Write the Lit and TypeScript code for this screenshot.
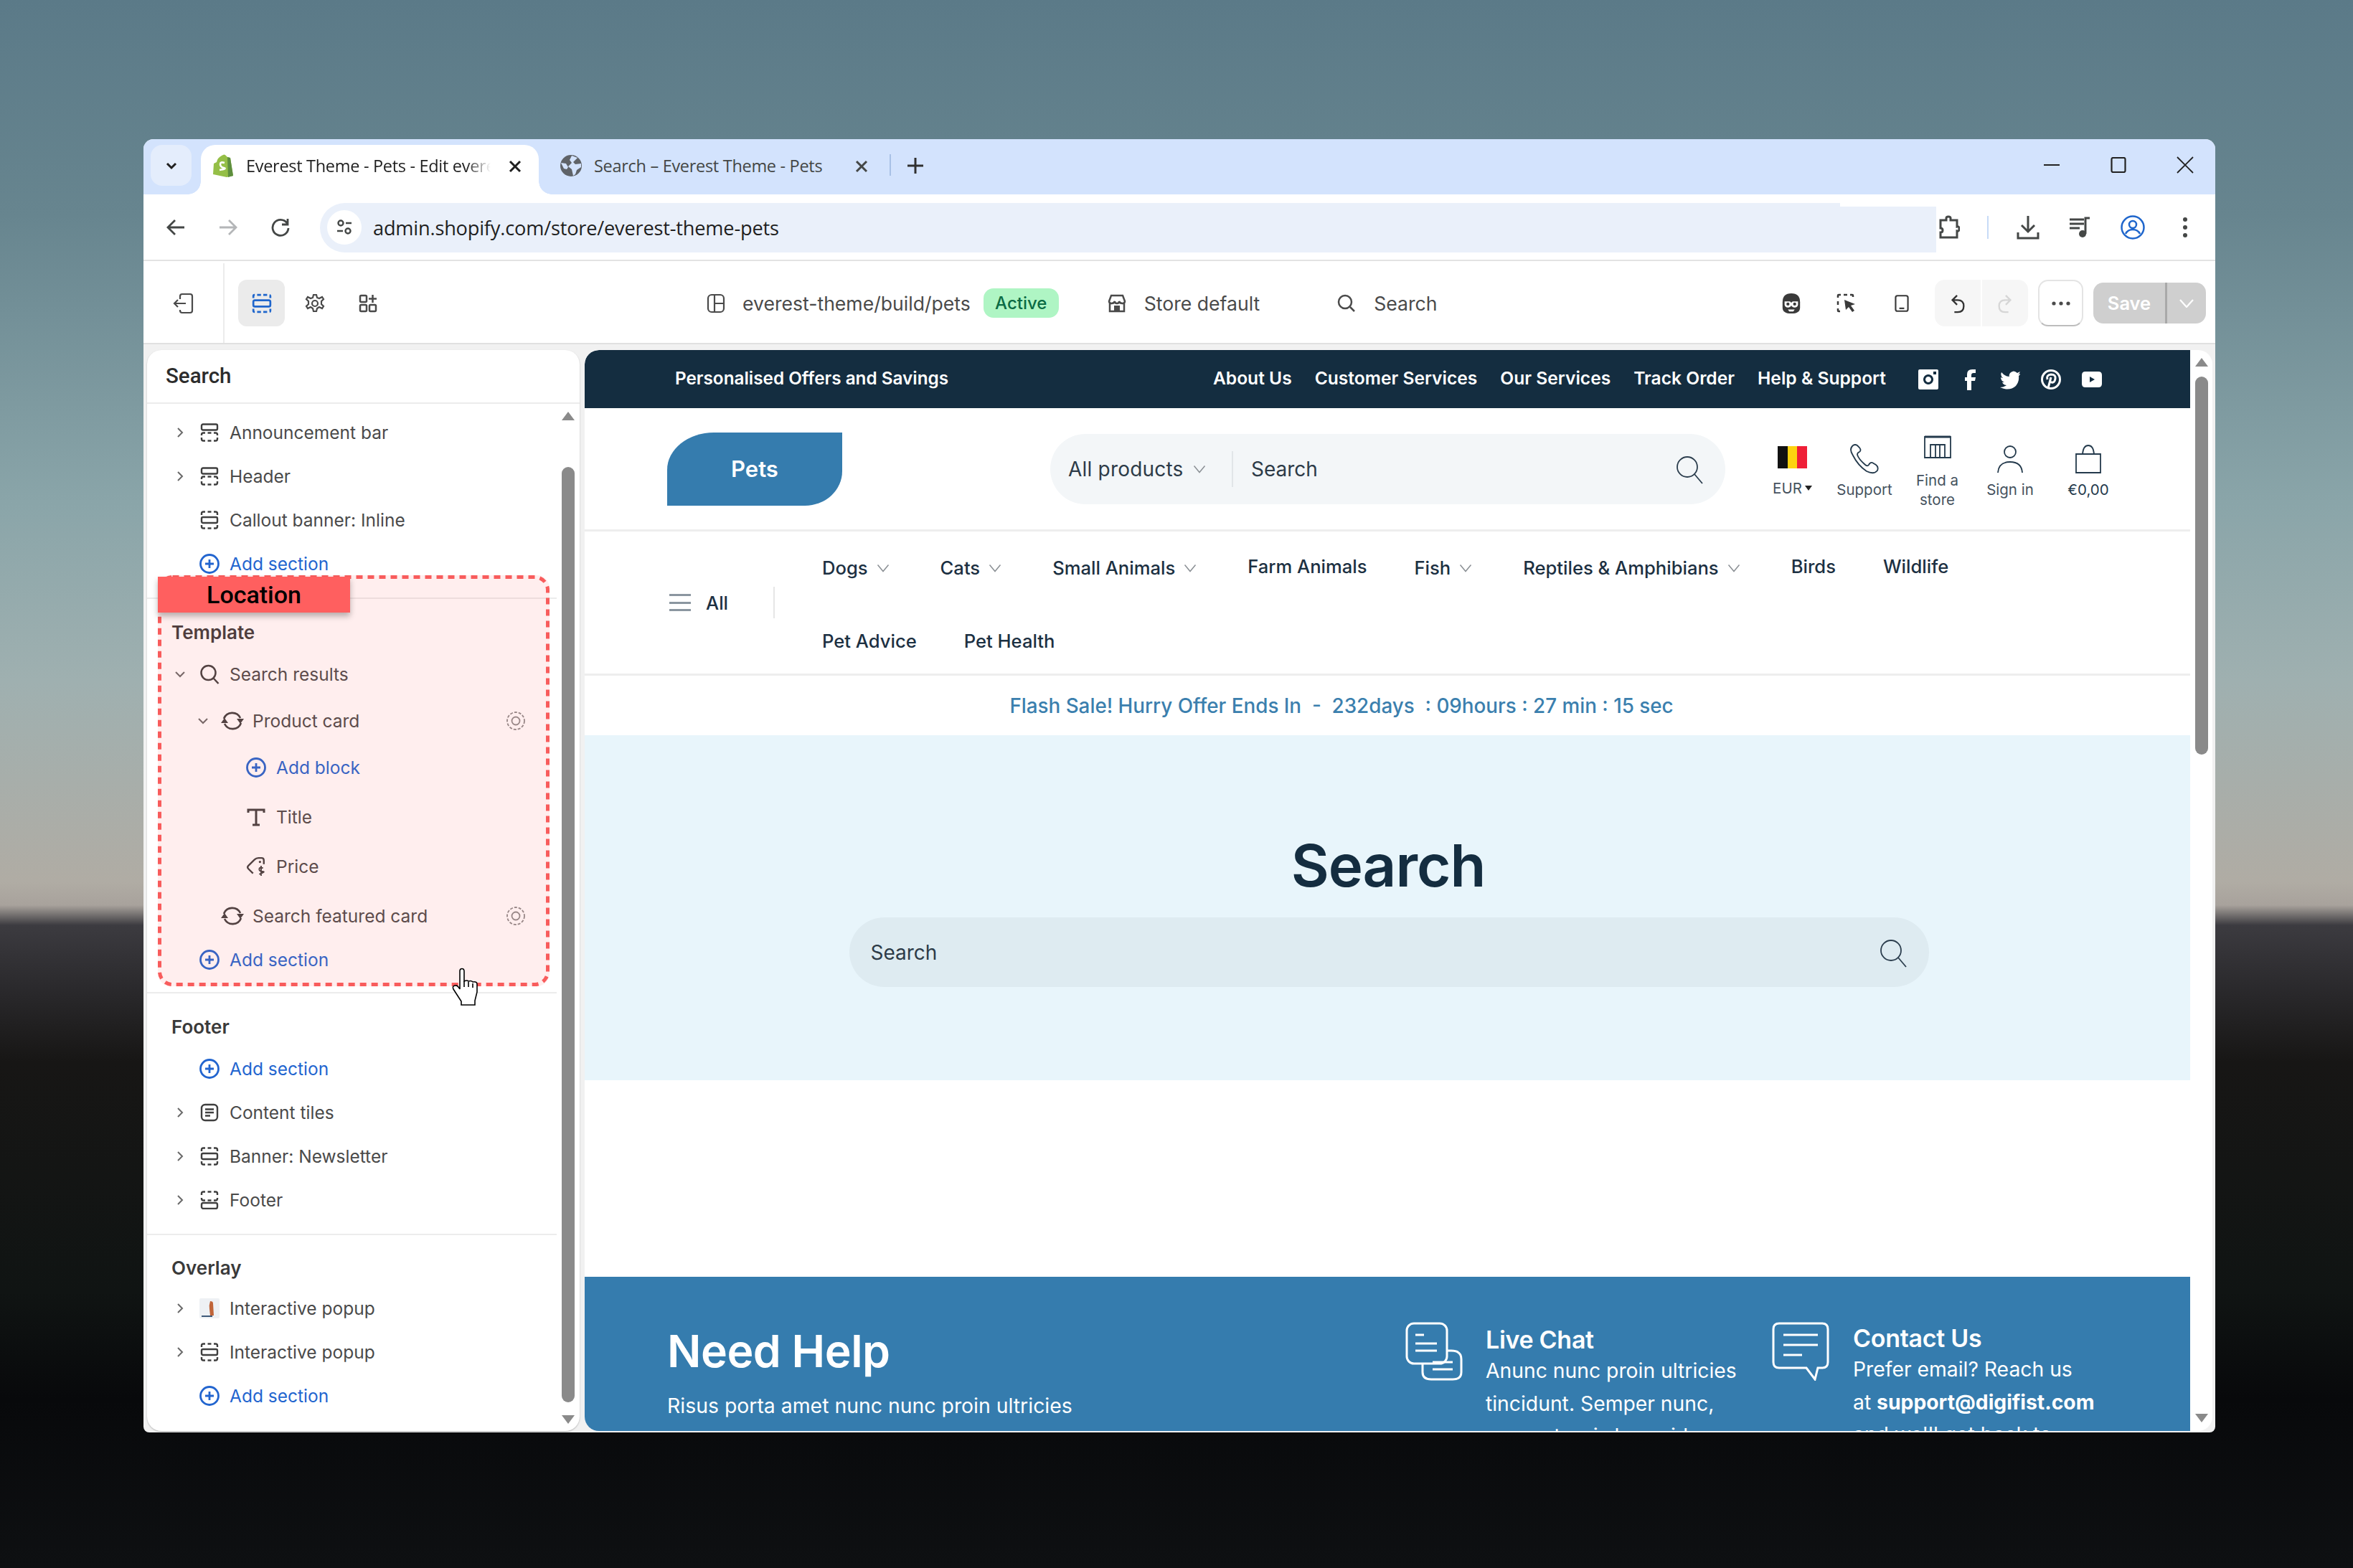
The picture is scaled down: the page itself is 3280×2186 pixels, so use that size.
import { LitElement, html, css, TemplateResult } from "lit";
import { customElement } from "lit/decorators.js";

const chevR = html`<svg class="chev" viewBox="0 0 12 16"><path d="M3 2l6 6-6 6"/></svg>`;
const chevD = html`<svg class="chev" viewBox="0 0 16 12"><path d="M2 3l6 6 6-6"/></svg>`;
const thin = html`<svg class="thinchev" viewBox="0 0 18 12"><path d="M1.500 1.500L9 10.500l7.500-9"/></svg>`;

const topDash = "M2 6V4q0-2.500 2.500-2.500H7M10.500 1.500h5M19 1.500h2.500Q24 1.500 24 4v2";
const botDash = "M2 20v2q0 2.500 2.500 2.500H7M10.500 24.500h5M19 24.500h2.500Q24 24.500 24 22v-2";

const secTop = html`<svg class="ic26" viewBox="0 0 26 26"><rect x="2" y="1.500" width="22" height="8" rx="2"/><path d="M2 17v-1q0-2.500 2.500-2.500H7M10.500 13.500h5M19 13.500h2.500Q24 13.500 24 16v1${botDash}"/></svg>`;
const secMid = html`<svg class="ic26" viewBox="0 0 26 26"><path d="${topDash}${botDash}"/><rect x="2" y="9" width="22" height="8" rx="2"/></svg>`;
const secBot = html`<svg class="ic26" viewBox="0 0 26 26"><path d="${topDash}M2 10v1q0 2.500 2.500 2.500H7M10.500 13.500h5M19 13.500h2.500Q24 13.500 24 11v-1"/><rect x="2" y="17" width="22" height="8" rx="2.500"/></svg>`;
const tiles = html`<svg class="ic26" viewBox="0 0 26 26"><rect x="2" y="2" width="22" height="22" rx="5"/><path d="M7 8.500h12M7 13h12M7 17.500h7"/></svg>`;
const searchI = html`<svg class="ic28 bold" viewBox="0 0 28 28"><circle cx="12.500" cy="12" r="10"/><path d="M19.500 19.500l7 7.500"/></svg>`;
const sync = html`<svg class="ic32" viewBox="0 0 34 30"><path d="M5 12A12.500 12.500 0 0 1 28 11M29 18A12.500 12.500 0 0 1 6 19"/><path class="fill" d="M23 12h10l-5 7zM1 18h10l-5-7z"/></svg>`;
const plus = html`<svg class="ic28 blue" viewBox="0 0 28 28"><circle cx="14" cy="14" r="12.500"/><path d="M14 8v12M8 14h12"/></svg>`;
const tee = html`<svg class="ic26 tee" viewBox="0 0 26 26"><path d="M2 7V3h22v4M13 3v21M8 24h10"/></svg>`;
const price = html`<svg class="ic28" viewBox="0 0 26 26"><path d="M9 22L3 16q-2-2 0-4L11 4q2-2 5-2h4q3 0 3 3v5"/><circle class="fill" cx="18" cy="7" r="1.500"/><path d="M22 15q-5-1.500-5 1.500t4.500 3-4.500 3.500M19.500 12v13" style="stroke-width:1.700"/></svg>`;
const eye = html`<svg class="ic26 eye" viewBox="0 0 28 28"><circle cx="14" cy="14" r="12" stroke-dasharray="4 2"/><circle cx="14" cy="14" r="5.500"/></svg>`;
const thumb = html`<svg class="ic28" viewBox="0 0 28 28"><rect class="nost" width="28" height="28" rx="2" fill="#eef1f4"/><path class="nost" d="M15 4q4 0 4 3l1 17h-5l-1-9q-1-5 1-11z" fill="#c0653a"/><path class="nost" d="M3 24h15v2H3z" fill="#3f5a7a"/></svg>`;

type Row = { label: string; icon: TemplateResult; chev?: "r" | "d"; ind?: number; mt?: number; add?: boolean; eye?: boolean };

const add = (label = "Add section", ind = 0, mt = 0): Row => ({ label, icon: plus, ind, mt, add: true });

const g1: Row[] = [
  { label: "Announcement bar", icon: secTop, chev: "r" },
  { label: "Header", icon: secTop, chev: "r" },
  { label: "Callout banner: Inline", icon: secMid },
  add(),
];
const g2: Row[] = [
  { label: "Search results", icon: searchI, chev: "d" },
  { label: "Product card", icon: sync, chev: "d", ind: 1, mt: 4, eye: true },
  add("Add block", 2, 4),
  { label: "Title", icon: tee, ind: 2, mt: 8 },
  { label: "Price", icon: price, ind: 2, mt: 8 },
  { label: "Search featured card", icon: sync, ind: 1, mt: 8, eye: true },
  add(),
];
const g3: Row[] = [
  add(),
  { label: "Content tiles", icon: tiles, chev: "r" },
  { label: "Banner: Newsletter", icon: secMid, chev: "r" },
  { label: "Footer", icon: secBot, chev: "r" },
];
const g4: Row[] = [
  { label: "Interactive popup", icon: thumb, chev: "r" },
  { label: "Interactive popup", icon: secMid, chev: "r" },
  add(),
];

const row = (r: Row) => html`<div class="row ind${r.ind ?? 0} mt${r.mt ?? 0} ${r.add ? "isadd" : ""}">
  <span class="cv">${r.chev === "r" ? chevR : r.chev === "d" ? chevD : ""}</span>
  <span class="ri">${r.icon}</span>
  <span class="rl">${r.label}</span>
  ${r.eye ? html`<span class="re">${eye}</span>` : ""}
</div>`;

const navItems: [string, boolean][] = [
  ["Dogs", true], ["Cats", true], ["Small Animals", true], ["Farm Animals", false],
  ["Fish", true], ["Reptiles & Amphibians", true], ["Birds", false], ["Wildlife", false],
];

@customElement("app-root")
export class AppRoot extends LitElement {
  static styles = css`
    :host { display: block; width: 3280px; height: 2186px; overflow: hidden; box-sizing: border-box; padding: 194px 192px 0 200px;
      font-family: Inter, "Liberation Sans", sans-serif; color: #303030;
      background: linear-gradient(180deg, #5b7a88 0, #67858f 300px, #8aa5a9 700px, #9fb0b0 950px, #b0aca4 1230px, #a8a29c 1262px, #3c3b40 1290px, #2c2b2e 1370px, #171615 1480px, #101413 1800px, #08090b 1950px, #0e1012 2186px); }
    * { box-sizing: border-box; }
    svg { display: block; fill: none; stroke: currentColor; stroke-width: 2.200; flex: none; }
    svg .fill { fill: currentColor; stroke: none; }
    svg .nost { stroke: none; }
    .win { width: 2888px; height: 1803px; border-radius: 14px 14px 8px 8px; overflow: hidden; background: #f1f1f1; display: flex; flex-direction: column; position: relative; }

    .tabs { height: 77px; background: #d3e3fd; display: flex; padding: 8px 0 0 10px; font-family: "Open Sans", sans-serif; font-size: 23.500px; color: #1f1f1f; letter-spacing: -0.300px; flex: none; }
    .tabmenu { width: 57px; height: 57px; border-radius: 16px; background: #e4edfc; display: flex; align-items: center; justify-content: center; }
    .tab { height: 69px; display: flex; align-items: center; position: relative; padding-bottom: 11px; }
    .tab.on { width: 471px; margin-left: 13px; background: #fff; border-radius: 20px 20px 0 0; padding-left: 17px; }
    .tab.on::before, .tab.on::after { content: ""; position: absolute; bottom: 0; width: 18px; height: 18px; }
    .tab.on::before { left: -18px; background: radial-gradient(circle at 0 0, transparent 17.500px, #fff 18px); }
    .tab.on::after { right: -18px; background: radial-gradient(circle at 100% 0, transparent 17.500px, #fff 18px); }
    .tab.two { width: 489px; padding-left: 30px; color: #444746; }
    .tabt { margin-left: 18px; width: 341px; white-space: nowrap; overflow: hidden; -webkit-mask-image: linear-gradient(90deg, #000 90%, transparent); mask-image: linear-gradient(90deg, #000 90%, transparent); }
    .two .tabt { width: 340px; margin-left: 17px; -webkit-mask-image: none; mask-image: none; }
    .tabx { position: absolute; right: 21px; top: 18px; color: #1f1f1f; }
    .two .tabx { right: 27px; color: #444746; }
    .tabsep { width: 2px; height: 30px; background: #a8c1e6; margin: 13px 0 0 0; }
    .newtab { width: 68px; height: 57px; display: flex; align-items: center; justify-content: center; color: #303030; }
    .winctl { margin-left: auto; display: flex; margin-right: -4px; margin-top: -8px; }
    .winctl div { width: 93px; height: 72px; display: flex; align-items: center; justify-content: center; color: #222; }

    .addr { height: 93px; background: #fff; border-bottom: 2px solid #e3e3e3; display: flex; align-items: center; padding: 1px 6px 0 8px; flex: none; font-family: "Open Sans", sans-serif; }
    .cell { width: 73px; display: flex; justify-content: center; color: #444746; flex: none; }
    .cell.off { color: #b4b6b8; }
    .omni { margin-left: 19px; flex: 1; height: 69px; background: #eaf0fa; border-radius: 35px 0 0 35px; display: flex; align-items: center; padding-left: 10px; position: relative; font-size: 27.200px; color: #1f1f1f; letter-spacing: -0.200px; }
    .omni::after { content: ""; position: absolute; right: 0; top: 0; width: 134px; height: 5px; background: #fff; }
    .site { width: 48px; height: 48px; border-radius: 50%; background: #fff; display: flex; align-items: center; justify-content: center; margin-right: 16px; color: #444746; }
    .ext { width: 40px; flex: none; display: flex; justify-content: center; color: #444746; margin-left: -2px; margin-right: 2px; }
    .vsep { width: 2px; height: 32px; background: #c7dbf7; margin: 0 18px 0 31px; flex: none; }

    .tool { height: 116px; background: #fff; border-bottom: 2px solid #e0e0e0; display: flex; align-items: center; padding: 3px 13px 0 0; flex: none; font-size: 26.600px; color: #4a4a4a; }
    .exit { width: 113px; height: 100%; border-right: 2px solid #ececec; display: flex; align-items: center; padding-left: 41px; color: #4a4a4a; }
    .modes { display: flex; gap: 9px; margin-left: 19px; }
    .mode { width: 65px; height: 65px; border-radius: 12px; display: flex; align-items: center; justify-content: center; color: #4a4a4a; }
    .mode.on { background: #ebebeb; color: #1f66cc; }
    .tgroup { display: flex; align-items: center; white-space: nowrap; }
    .tgroup.th { margin-left: 439px; }
    .tgroup.th svg { margin-right: 23px; }
    .pill { width: 105px; height: 41px; border-radius: 14px; background: #aff5c4; color: #0b6b44; font-size: 24px; font-weight: 500; display: flex; align-items: center; justify-content: center; margin-left: 18px; }
    .tgroup.st { margin-left: 67px; gap: 24px; }
    .tgroup.se { margin-left: 108px; gap: 25px; }
    .tright { margin-left: auto; display: flex; align-items: center; }
    .tbi { width: 77px; display: flex; justify-content: center; color: #3a3a3a; }
    .undo { width: 130px; height: 65px; border-radius: 14px; background: #f6f6f6; display: flex; margin-left: 8px; }
    .undo div { flex: 1; display: flex; align-items: center; justify-content: center; color: #333; }
    .undo div + div { border-left: 2px solid #fff; color: #d6d6d6; }
    .more { width: 63px; height: 65px; margin-left: 14px; border-radius: 14px; border: 2px solid #e4e4e4; border-bottom-color: #bdbdbd; background: #fff; display: flex; align-items: center; justify-content: center; }
    .save { width: 157px; height: 57px; margin-left: 14px; border-radius: 14px; background: #cfcfcf; display: flex; color: #fff; font-weight: 600; font-size: 25.500px; overflow: hidden; }
    .save span { width: 103px; display: flex; align-items: center; justify-content: center; border-right: 3px solid #a9a9a9; }
    .save div { flex: 1; display: flex; align-items: center; justify-content: center; }

    .main { flex: 1; min-height: 0; display: flex; gap: 7px; padding: 8px 4px 2px 5px; }
    .side { width: 603px; background: #fff; border-radius: 20px; display: flex; flex-direction: column; overflow: hidden; box-shadow: 0 1px 2px rgba(0,0,0,.25); }
    .stitle { height: 75px; flex: none; border-bottom: 2px solid #ececec; padding: 0 0 2px 26px; display: flex; align-items: center; font-size: 29.500px; color: #2c2c2c; font-family: Roboto, sans-serif; font-weight: 500; }
    .sbody { flex: 1; min-height: 0; display: flex; }
    .list { width: 571px; flex: none; position: relative; font-size: 24.500px; }
    .grp { padding-bottom: 15px; border-bottom: 2px solid #ececec; }
    .grp.g1 { padding-top: 9px; padding-bottom: 17px; }
    .grp.g2 { padding-top: 26px; }
    .grp.g3 { padding-top: 26px; padding-bottom: 17px; }
    .grp.g4 { padding-top: 25px; border: 0; }
    .h { height: 40px; display: flex; align-items: center; padding-left: 34px; font-weight: 600; font-size: 26px; color: #3a3a3a; margin-bottom: 8px; }
    .g4 .h { margin-bottom: 6px; }
    .row { height: 61px; display: flex; align-items: center; padding-left: 35px; color: #4a4a4a; position: relative; }
    .ind1 { padding-left: 67px; } .ind2 { padding-left: 100px; }
    .mt4 { margin-top: 4px; } .mt8 { margin-top: 8px; }
    .cv { width: 22px; display: flex; justify-content: center; color: #6a6a6a; flex: none; }
    .ri { width: 36px; margin-left: 12px; display: flex; justify-content: center; color: #3f3f3f; flex: none; }
    .rl { margin-left: 10px; white-space: nowrap; }
    .isadd { color: #2265cf; } .isadd .ri { color: #2265cf; }
    .blue { stroke-width: 2.800; }
    .bold { stroke-width: 2.500; }
    .re { position: absolute; left: 500px; top: 17px; color: #8c8c8c; }
    .chev { width: 16px; height: 16px; stroke-width: 2; }
    .thinchev { width: 20px; height: 12px; stroke: #8a8f94; stroke-width: 1.500; flex: none; }
    .ic26 { width: 26px; height: 26px; stroke-width: 2.400; }
    .ic28 { width: 28px; height: 28px; }
    .ic32 { width: 36px; height: 30px; stroke-width: 2.600; }
    .ic24 { width: 24px; height: 24px; }
    .eye { width: 28px; height: 28px; stroke-width: 1.800; }
    .tee { stroke-width: 3; }
    .gutter { flex: 1; padding-left: 7px; color: #8a8a8a; }
    .sarrow { width: 18px; height: 12px; }
    .sarrow path { fill: #8a8a8a; stroke: none; }
    .gutter .up { margin-top: 11px; }
    .gutter .th { width: 18px; height: 1304px; margin-top: 65px; border-radius: 9px; background: #8a8a8a; }
    .gutter .dn { margin-top: 18px; }

    .loc { position: absolute; left: 15px; top: 239px; width: 546px; height: 573px; border-radius: 18px; background: rgba(255, 96, 96, .105); }
    .locb { position: absolute; inset: 0; width: 546px; height: 573px; stroke: #f85c5c; stroke-width: 5; stroke-dasharray: 9 7; }
    .locl { position: absolute; left: 0; top: 2px; width: 268px; height: 50px; background: #ff5f5f; color: #000; font-family: Roboto, sans-serif; font-weight: 500; font-size: 34px; display: flex; align-items: center; justify-content: center; box-shadow: 0 5px 8px rgba(0,0,0,.28); }
    .hand { position: absolute; left: 424px; top: 786px; width: 38px; height: 54px; stroke: #000; stroke-width: 1.600; }

    .prev { flex: 1; background: #fff; border-radius: 20px; overflow: hidden; display: flex; min-width: 0; height: 1507px; }
    .page { width: 2238px; flex: none; height: 100%; overflow: hidden; font-family: Inter, sans-serif; color: #15304a; border-radius: 20px 0 0 0; }
    .pscroll { flex: 1; padding: 11px 0 0 7px; }
    .pscroll .th { width: 18px; height: 527px; margin-top: 14px; border-radius: 9px; background: #8a8a8a; }
    .pscroll .dn { margin-top: 919px; }
    .bar { height: 81px; background: #142d40; color: #fff; display: flex; align-items: center; padding: 0 109px 3px 126px; font-size: 24.300px; font-weight: 600; }
    .links { margin-left: auto; display: flex; gap: 32px; font-size: 24.600px; }
    .social { display: flex; margin-left: 30px; padding-top: 3px; }
    .social div { width: 57px; display: flex; justify-content: center; }
    .social svg { fill: #fff; stroke: none; width: 30px; height: 30px; }
    .hd { height: 172px; border-bottom: 3px solid #eeeeee; display: flex; align-items: center; padding-left: 115px; }
    .logo { width: 244px; height: 102px; background: #357cae; border-radius: 65px 0 52px 0 / 52px 0 48px 0; color: #fff; font-weight: 600; font-size: 31px; display: flex; align-items: center; justify-content: center; }
    .sbar { width: 941px; height: 98px; margin-left: 290px; border-radius: 49px; background: #f3f6f8; display: flex; align-items: center; padding-left: 25px; font-size: 28px; color: #2d3b48; }
    .sbar .cat { width: 228px; display: flex; align-items: center; gap: 12px; letter-spacing: .2px; }
    .sbar .vl { width: 2px; height: 50px; background: #e1e5e8; }
    .sbar .q { margin-left: 25px; }
    .sbar .si { margin-left: auto; margin-right: 30px; }
    .sic { width: 40px; height: 42px; stroke-width: 1.800; color: #2c3e4e; }
    .hic { display: flex; margin-left: 43px; align-items: center; font-size: 20.500px; color: #45525e; text-align: center; line-height: 27px; padding-top: 8px; }
    .hi { display: flex; flex-direction: column; align-items: center; }
    .hi svg { color: #243a4c; stroke-width: 1.800; }
    .hi .m8 { margin-top: 8px; }
    .hi .m9 { margin-top: 9px; }
    .hi .m16 { margin-top: 16px; }
    .w1 { width: 101px; } .w2 { width: 100px; } .w3 { width: 103px; padding-right: 0; } .w4 { width: 100px; } .w5 { width: 118px; color: #243a4c; }
    .flag { width: 41px; height: 31px; display: flex; margin-bottom: 14px; }
    .flag i { flex: 1; }
    .eur { display: flex; align-items: center; gap: 4px; }
    .eur::after { content: ""; border: 5px solid transparent; border-top: 7px solid #222; margin-top: 5px; }
    .nav { height: 201px; border-bottom: 3px solid #eeeeee; display: flex; align-items: center; padding-left: 115px; font-size: 25.600px; font-weight: 500; color: #1c3042; }
    .all { display: flex; align-items: center; gap: 21px; width: 150px; height: 44px; border-right: 2px solid #e6e6e6; padding-left: 3px; }
    .burger { width: 30px; height: 24px; display: flex; flex-direction: column; justify-content: space-between; }
    .burger i { height: 3px; background: #8b96a0; display: block; }
    .navc { margin-left: 66px; display: flex; flex-direction: column; gap: 70px; padding-top: 4px; margin-top: -5px; }
    .navr { display: flex; gap: 66px; align-items: center; height: 32px; white-space: nowrap; }
    .navr span { display: flex; align-items: center; gap: 11px; position: relative; top: 3px; }
    .navr span.dd { margin-right: 4px; }
    .navr span.plain { top: 1px; }
    .flash { height: 83px; display: flex; align-items: center; justify-content: center; color: #3b7fae; font-size: 27.800px; font-weight: 500; white-space: pre; padding: 0 128px 0 0; }
    .hero { height: 481px; background: #e8f5fb; display: flex; flex-direction: column; align-items: center; padding-top: 130px; }
    .hero h1 { margin: 0; font-size: 81.500px; font-weight: 600; line-height: 104px; color: #142d40; letter-spacing: -1px; padding-left: 2px; }
    .hbar { width: 1505px; height: 97px; margin-top: 20px; margin-left: 4px; border-radius: 49px; background: #deebf1; display: flex; align-items: center; padding: 0 30px; font-size: 28px; color: #2d3b48; justify-content: space-between; }
    .gap { height: 274px; background: #fff; }
    .foot { height: 260px; background: #357cae; color: #fff; display: flex; padding-left: 115px; }
    .fa { width: 1029px; padding-top: 69px; }
    .fa h2 { margin: 0; font-size: 62.500px; line-height: 68px; font-weight: 600; letter-spacing: -0.500px; }
    .fa p { margin: 23px 0 0; font-size: 28.400px; line-height: 40px; }
    .fb { display: flex; padding-top: 63px; gap: 32px; }
    .fb.c1 { width: 511px; }
    .fb.c2 { gap: 33px; }
    .fb svg { width: 80px; height: 82px; stroke: #fff; stroke-width: 3; }
    .fb h3 { margin: 5px 0 1px; font-size: 34px; line-height: 40px; font-weight: 600; letter-spacing: -0.300px; }
    .fb.c2 h3 { margin-top: 3px; }
    .fb div div { font-size: 28.300px; line-height: 45.500px; white-space: nowrap; }
    .fb b { font-weight: 700; }
  `;

  render() {
    return html`<div class="win">
      <div class="tabs">
        <div class="tabmenu"><svg class="ic24" viewBox="0 0 24 24" style="stroke-width:3;color:#1f1f1f"><path d="M6 9l6 6 6-6"/></svg></div>
        <div class="tab on">
          <svg width="28" height="34" viewBox="0 0 28 34" style="stroke:none"><path d="M20 5l-2-2q-2-3-6 0Q6 6 5 12l-4 2L0 29l19 4 9-2-4-25z" fill="#95bf47"/><path d="M20 5l1 28 7-2-4-25z" fill="#5e8e3e"/><path d="M16 13q-6-2-6 2t5 5-6 3" fill="none" stroke="#fff" stroke-width="2.600"/></svg>
          <span class="tabt">Everest Theme - Pets - Edit everest</span>
          <svg class="tabx ic24" viewBox="0 0 24 24" style="stroke-width:3"><path d="M5 5l14 14M19 5L5 19"/></svg>
        </div>
        <div class="tab two">
          <svg width="30" height="30" viewBox="0 0 30 30" style="stroke:none"><circle cx="15" cy="15" r="15" fill="#5f6368"/><path d="M16 1l8 3-6 6 3 3 8-1v5l-6 4-2 6-3 2-2-9-5-4 5-5-3-4zM1 11l7 1 3 5-2 3-4-1z" fill="#d3e3fd"/></svg>
          <span class="tabt">Search – Everest Theme - Pets</span>
          <svg class="tabx ic24" viewBox="0 0 24 24" style="stroke-width:3"><path d="M5 5l14 14M19 5L5 19"/></svg>
        </div>
        <div class="tabsep"></div>
        <div class="newtab"><svg class="ic28" viewBox="0 0 28 28" style="stroke-width:3"><path d="M14 3v22M3 14h22"/></svg></div>
        <div class="winctl">
          <div><svg width="22" height="22" viewBox="0 0 22 22"><path d="M0 11h22"/></svg></div>
          <div><svg width="22" height="22" viewBox="0 0 22 22"><rect x="1.500" y="1" width="19" height="20" rx="2"/></svg></div>
          <div><svg width="24" height="24" viewBox="0 0 24 24"><path d="M1 1l22 22M23 1L1 23" style="stroke-width:1.800"/></svg></div>
        </div>
      </div>

      <div class="addr">
        <div class="cell"><svg class="ic28" viewBox="0 0 28 28" style="stroke-width:2.800"><path d="M26 14H4M13 4L3 14l10 10"/></svg></div>
        <div class="cell off"><svg class="ic28" viewBox="0 0 28 28" style="stroke-width:2.800"><path d="M2 14h22M15 4l10 10-10 10"/></svg></div>
        <div class="cell"><svg class="ic28" viewBox="0 0 28 28" style="stroke-width:2.800"><path d="M23 8A11 11 0 1 0 25 15M24 2v8h-8"/></svg></div>
        <div class="omni">
          <span class="site"><svg class="ic26" viewBox="0 0 26 26"><circle cx="8" cy="7" r="3.500"/><path d="M15 7h8M3 18h8"/><circle cx="18" cy="18" r="3.500"/></svg></span>
          admin.shopify.com/store/everest-theme-pets
        </div>
        <div class="ext"><svg width="30" height="34" viewBox="0 0 30 34" style="stroke-width:3"><path d="M3 7h8V4q0-2 3-2t3 2v3h9v9q3-1 3 3t-3 3v9H3v-7q3 0 3-3t-3-3z"/></svg></div>
        <div class="vsep"></div>
        <div class="cell"><svg width="32" height="34" viewBox="0 0 32 34" style="stroke-width:3"><path d="M16 1v21M7 14l9 9 9-9M2 24v8h28v-8"/></svg></div>
        <div class="cell"><svg width="32" height="32" viewBox="0 0 32 32" style="stroke-width:3"><path d="M1 5h20M1 11h20M1 17h14M29 3h-6v22"/><circle class="fill" cx="19" cy="25" r="5"/></svg></div>
        <div class="cell" style="color:#1f66cc"><svg width="34" height="34" viewBox="0 0 34 34" style="stroke-width:2.500"><circle cx="17" cy="17" r="15.500"/><circle cx="17" cy="13" r="5"/><path d="M7 26q3-6 10-6t10 6"/></svg></div>
        <div class="cell"><svg width="10" height="32" viewBox="0 0 10 32" style="stroke:none"><circle class="fill" cx="5" cy="5" r="3"/><circle class="fill" cx="5" cy="16" r="3"/><circle class="fill" cx="5" cy="27" r="3"/></svg></div>
      </div>

      <div class="tool">
        <div class="exit"><svg width="30" height="30" viewBox="0 0 30 30"><path d="M10 9V5q0-3 3-3h11q3 0 3 3v20q0 3-3 3H13q-3 0-3-3v-1M18 15H2M7 10l-5 5 5 5"/></svg></div>
        <div class="modes">
          <div class="mode on"><svg class="ic28" viewBox="0 0 26 26" style="stroke-width:2.500"><path d="M2 6V3.500Q2 2 3.500 2h19Q24 2 24 3.500V6M2 20v2.500Q2 24 3.500 24h19q1.500 0 1.500-1.500V20" stroke-dasharray="5 3"/><rect x="2" y="9" width="22" height="8" rx="2"/></svg></div>
          <div class="mode"><svg class="ic28" viewBox="0 0 28 28"><path d="M12 2h4l1 4 3 1 4-2 2 3-3 3v4l3 3-2 3-4-2-3 2-1 4h-4l-1-4-3-2-4 2-2-3 3-3v-4L2 8l2-3 4 2 3-1z"/><circle cx="14" cy="14" r="4"/></svg></div>
          <div class="mode"><svg class="ic28" viewBox="0 0 28 28" style="stroke-width:2.500"><rect x="3" y="3" width="9" height="9" rx="1.500"/><rect x="3" y="16" width="9" height="9" rx="1.500"/><rect x="16" y="16" width="9" height="9" rx="1.500"/><path d="M20.500 2v11M15 7.500h11"/></svg></div>
        </div>
        <div class="tgroup th">
          <svg class="ic28" viewBox="0 0 28 28"><rect x="3" y="2" width="22" height="24" rx="5"/><path d="M12 2v24M12 14h13"/></svg>
          <span>everest-theme/build/pets</span>
          <span class="pill">Active</span>
        </div>
        <div class="tgroup st">
          <svg class="ic28" viewBox="0 0 28 28" style="stroke-width:2.500"><path d="M4 13v12h20V13M6 3h16l3 8q0 3-3.500 3T17 11q0 3-3 3t-3-3q-1 3-4.500 3T3 11z"/><rect class="fill" x="10" y="17" width="8" height="8"/></svg>
          <span>Store default</span>
        </div>
        <div class="tgroup se">
          <svg class="ic26" viewBox="0 0 26 26" style="stroke-width:2.500"><circle cx="11" cy="11" r="9"/><path d="M18 18l6 6"/></svg>
          <span>Search</span>
        </div>
        <div class="tright">
          <div class="tbi"><svg class="ic32" viewBox="0 0 32 32" style="stroke:none"><path class="fill" d="M16 1q13 0 13 13v8q0 9-13 9T3 22v-8Q3 1 16 1z"/><path d="M6 13h8l2 2 2-2h8v5q-1 4-5 4t-5-3q-1 3-5 3t-5-4zM11 25h10l-2 3h-6z" fill="#fff"/><circle class="fill" cx="11" cy="17" r="2.300"/><circle class="fill" cx="21" cy="17" r="2.300"/></svg></div>
          <div class="tbi"><svg class="ic28" viewBox="0 0 28 28" style="stroke-width:2.500"><path d="M2 6V3q0-1 1-1h3M10 2h5M19 2h3q1 0 1 1v2M2 11v5M2 21v3q0 1 1 1h2"/><path class="fill" d="M11 9l15 6-6 2 5 7-3 2-5-7-4 4z"/></svg></div>
          <div class="tbi"><svg class="ic28" viewBox="0 0 28 28" style="stroke-width:2.500;width:24px;height:32px"><rect x="4" y="1.500" width="20" height="25" rx="3"/><path d="M10 22h8"/></svg></div>
          <div class="undo">
            <div><svg class="ic28" viewBox="0 0 28 28" style="width:26px;height:34px;stroke-width:2.500"><path d="M13 2L6 9l7 7M6 9h8q9 0 9 9t-9 9H9"/></svg></div>
            <div><svg class="ic28" viewBox="0 0 28 28" style="width:26px;height:34px;stroke-width:2.500"><path d="M15 2l7 7-7 7M22 9h-8q-9 0-9 9t9 9h5"/></svg></div>
          </div>
          <div class="more"><svg width="28" height="6" viewBox="0 0 28 6" style="stroke:none"><circle class="fill" cx="4" cy="3" r="2.600"/><circle class="fill" cx="14" cy="3" r="2.600"/><circle class="fill" cx="24" cy="3" r="2.600"/></svg></div>
          <div class="save"><span>Save</span><div><svg width="20" height="12" viewBox="0 0 20 12"><path d="M1 1l9 10 9-10"/></svg></div></div>
        </div>
      </div>

      <div class="main">
        <div class="side">
          <div class="stitle">Search</div>
          <div class="sbody">
            <div class="list">
              <div class="grp g1">${g1.map(row)}</div>
              <div class="grp g2"><div class="h">Template</div>${g2.map(row)}</div>
              <div class="grp g3"><div class="h">Footer</div>${g3.map(row)}</div>
              <div class="grp g4"><div class="h">Overlay</div>${g4.map(row)}</div>
              <div class="loc">
                <svg class="locb" viewBox="0 0 546 573"><rect x="2.500" y="2.500" width="541" height="568" rx="18"/></svg>
                <div class="locl">Location</div>
              </div>
              <svg class="hand" viewBox="0 0 38 54"><path fill="#fff" d="M12 30V5q0-3.500 3-3.500T18 5v14q4-2 6 0 4-1.500 6 1 6-1 6 3v11l-3 12v6H14v-5L3 30q-2-4 2-5t7 5z"/><path d="M18 19v8M24 20v7M30 22v6"/></svg>
            </div>
            <div class="gutter">
              <svg class="sarrow up" viewBox="0 0 18 12"><path d="M9 0l9 12H0z"/></svg>
              <div class="th"></div>
              <svg class="sarrow dn" viewBox="0 0 18 12"><path d="M9 12L0 0h18z"/></svg>
            </div>
          </div>
        </div>

        <div class="prev">
          <div class="page">
            <div class="bar">
              <span>Personalised Offers and Savings</span>
              <div class="links"><span>About Us</span><span>Customer Services</span><span>Our Services</span><span>Track Order</span><span>Help &amp; Support</span></div>
              <div class="social">
                <div><svg viewBox="0 0 30 30"><path fill-rule="evenodd" d="M3 1h24q2 0 2 2v24q0 2-2 2H3q-2 0-2-2V3q0-2 2-2zM15 8a7 7 0 1 0 .01 0zM15 11a4 4 0 1 1-.01 0zM22 4h4v4h-4z"/></svg></div>
                <div><svg viewBox="0 0 30 30"><path d="M18 30V17h5l1-5h-6V9q0-3 3-3h3V1h-5q-7 0-7 7v4H9v5h3v13z"/></svg></div>
                <div><svg viewBox="0 0 30 30"><path d="M29 7q-2 1-3 1 2-1 3-4-2 1-4 2-5-5-10 0-2 3-1 5Q8 11 3 5q-2 5 2 8-1 0-3-1 0 5 5 7h-3q2 4 6 4-4 3-9 3 13 6 22-2 5-6 4-14 2-1 2-3z"/></svg></div>
                <div><svg viewBox="0 0 30 30" style="fill:none;stroke:#fff;stroke-width:3"><circle cx="15" cy="15" r="12.500"/><path d="M11 27l4-15M10 15q-2-6 5-7 7 0 6 6-1 6-5 5-2 0-3-2"/></svg></div>
                <div><svg viewBox="0 0 30 30"><path fill-rule="evenodd" d="M6 4h18q5 0 5 5v12q0 5-5 5H6q-5 0-5-5V9q0-5 5-5zM12 11v8l7-4z"/></svg></div>
              </div>
            </div>
            <div class="hd">
              <div class="logo">Pets</div>
              <div class="sbar">
                <div class="cat">All products ${thin}</div>
                <div class="vl"></div>
                <div class="q">Search</div>
                <svg class="sic si" viewBox="0 0 40 42"><circle cx="17" cy="18" r="14"/><path d="M27 28l11 13"/></svg>
              </div>
              <div class="hic">
                <div class="hi w1"><div class="flag"><i style="background:#111"></i><i style="background:#fdd30f"></i><i style="background:#ef1f37"></i></div><span class="eur">EUR</span></div>
                <div class="hi w2"><svg width="42" height="42" viewBox="0 0 42 42"><path d="M5 2q-6 5 0 14 7 14 19 22 10 5 15-1 2-5-2-8l-5-3q-3-1-5 3-2 3-6-1-8-7-10-13 0-3 3-4 3-2 0-6L11 2Q8 0 5 2z"/></svg><span class="m8">Support</span></div>
                <div class="hi w3"><svg width="40" height="34" viewBox="0 0 40 34"><path d="M2 3h36v29H2z"/><path d="M2 3h36" style="stroke-width:3"/><path d="M10 32V14h20v18M17 14v18M23 14v18"/></svg><span class="m16">Find a<br />store</span></div>
                <div class="hi w4"><svg width="38" height="40" viewBox="0 0 38 40"><circle cx="19" cy="10" r="8"/><path d="M2 39q1-15 17-15t17 15"/></svg><span class="m9">Sign in</span></div>
                <div class="hi w5"><svg width="38" height="40" viewBox="0 0 38 40"><path d="M2 13h34v26H2z"/><path d="M11 13q1-12 8-12t8 12"/></svg><span class="m9">€0,00</span></div>
              </div>
            </div>
            <div class="nav">
              <div class="all"><div class="burger"><i></i><i></i><i></i></div>All</div>
              <div class="navc">
                <div class="navr">${navItems.map(([t, c]) => html`<span class=${c ? "dd" : "plain"}>${t}${c ? thin : ""}</span>`)}</div>
                <div class="navr"><span>Pet Advice</span><span>Pet Health</span></div>
              </div>
            </div>
            <div class="flash">Flash Sale! Hurry Offer Ends In  -  232days  : 09hours : 27 min : 15 sec</div>
            <div class="hero">
              <h1>Search</h1>
              <div class="hbar"><span>Search</span><svg class="sic" viewBox="0 0 40 42"><circle cx="17" cy="18" r="14"/><path d="M27 28l11 13"/></svg></div>
            </div>
            <div class="gap"></div>
            <div class="foot">
              <div class="fa"><h2>Need Help</h2><p>Risus porta amet nunc nunc proin ultricies</p></div>
              <div class="fb c1">
                <svg viewBox="0 0 80 82"><rect x="2" y="2" width="56" height="56" rx="10"/><path d="M58 40h6q14 0 14 12v18q0 10-12 10H36q-12 0-12-10V58M14 18h12M14 30h30M14 40h30M38 56h28M38 66h28"/></svg>
                <div><h3>Live Chat</h3><div>Anunc nunc proin ultricies</div><div>tincidunt. Semper nunc,</div><div>ornare turpis lacus id</div></div>
              </div>
              <div class="fb c2">
                <svg viewBox="0 0 80 82"><path d="M10 2h60q8 0 8 8v46q0 8-8 8H64l-4 16-12-16H10q-8 0-8-8V10q0-8 8-8z"/><path d="M16 18h48M16 32h48M16 46h26"/></svg>
                <div><h3>Contact Us</h3><div>Prefer email? Reach us</div><div>at <b>support@digifist.com</b></div><div>and we'll get back to</div></div>
              </div>
            </div>
          </div>
          <div class="pscroll">
            <svg class="sarrow" viewBox="0 0 18 12"><path d="M9 0l9 12H0z"/></svg>
            <div class="th"></div>
            <svg class="sarrow dn" viewBox="0 0 18 12"><path d="M9 12L0 0h18z"/></svg>
          </div>
        </div>
      </div>
    </div>`;
  }
}
